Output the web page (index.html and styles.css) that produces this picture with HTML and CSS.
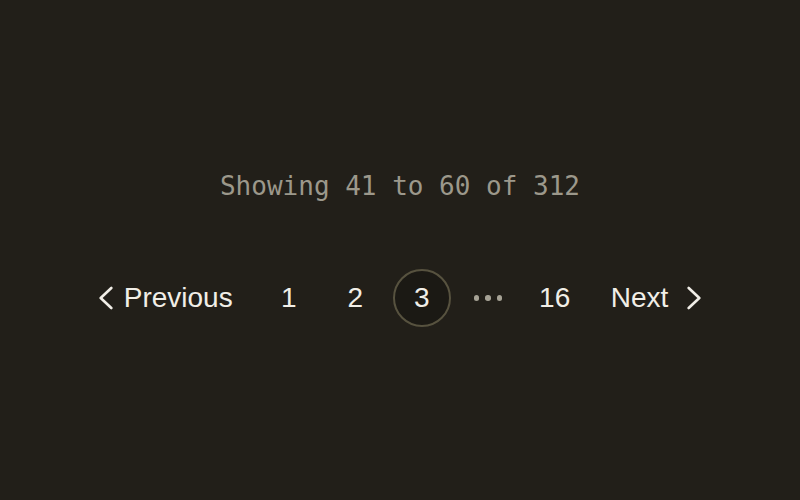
FILE: index.html
```html
<!DOCTYPE html>
<html lang="en">
<head>
<meta charset="utf-8">
<title>Pagination</title>
<link rel="stylesheet" href="styles.css">
</head>
<body>
<main class="wrap">
  <p class="summary">Showing 41 to 60 of 312</p>
  <nav class="pagination" aria-label="Pagination">
    <a class="step prev" href="#">
      <svg class="chev" width="14" height="24" viewBox="0 0 14 24" aria-hidden="true"><path d="M12.3 2 L1.7 12 L12.3 22" fill="none" stroke="currentColor" stroke-width="2.6" stroke-linecap="round" stroke-linejoin="round"/></svg>
      <span>Previous</span>
    </a>
    <a class="page" href="#">1</a>
    <a class="page" href="#">2</a>
    <a class="page current" href="#" aria-current="page">3</a>
    <span class="page ellipsis" aria-hidden="true"><i></i><i></i><i></i></span>
    <a class="page" href="#">16</a>
    <a class="step next" href="#">
      <span>Next</span>
      <svg class="chev" width="14" height="24" viewBox="0 0 14 24" aria-hidden="true"><path d="M1.7 2 L12.3 12 L1.7 22" fill="none" stroke="currentColor" stroke-width="2.6" stroke-linecap="round" stroke-linejoin="round"/></svg>
    </a>
  </nav>
</main>
</body>
</html>
```
FILE: styles.css
```css
html, body {
  margin: 0;
  padding: 0;
  background: #221f19;
}
body {
  height: 100vh;
  display: flex;
  align-items: center;
  justify-content: center;
}
.wrap {
  display: flex;
  flex-direction: column;
  align-items: center;
  gap: 68px;
  margin-top: -2px;
}
.summary {
  margin: 0;
  font-family: "DejaVu Sans Mono", monospace;
  font-size: 26px;
  line-height: 30px;
  color: #9c988b;
}
.pagination {
  display: flex;
  align-items: center;
  gap: 8.5px;
  font-family: "Liberation Sans", Arial, sans-serif;
  font-size: 28px;
  color: #f1eee7;
}
.pagination a {
  color: inherit;
  text-decoration: none;
}
.step {
  display: flex;
  align-items: center;
  padding: 0 18.5px;
  height: 58px;
}
.prev {
  gap: 11px;
}
.next {
  gap: 19px;
}
.chev {
  display: block;
}
.page {
  box-sizing: border-box;
  width: 58px;
  height: 58px;
  border-radius: 50%;
  border: 2px solid transparent;
  display: flex;
  align-items: center;
  justify-content: center;
}
.current {
  border-color: #57523f;
  background: #1b1914;
}
.ellipsis {
  gap: 6px;
}
.ellipsis i {
  display: block;
  width: 5.5px;
  height: 5.5px;
  border-radius: 50%;
  background: #a6a295;
}
```
